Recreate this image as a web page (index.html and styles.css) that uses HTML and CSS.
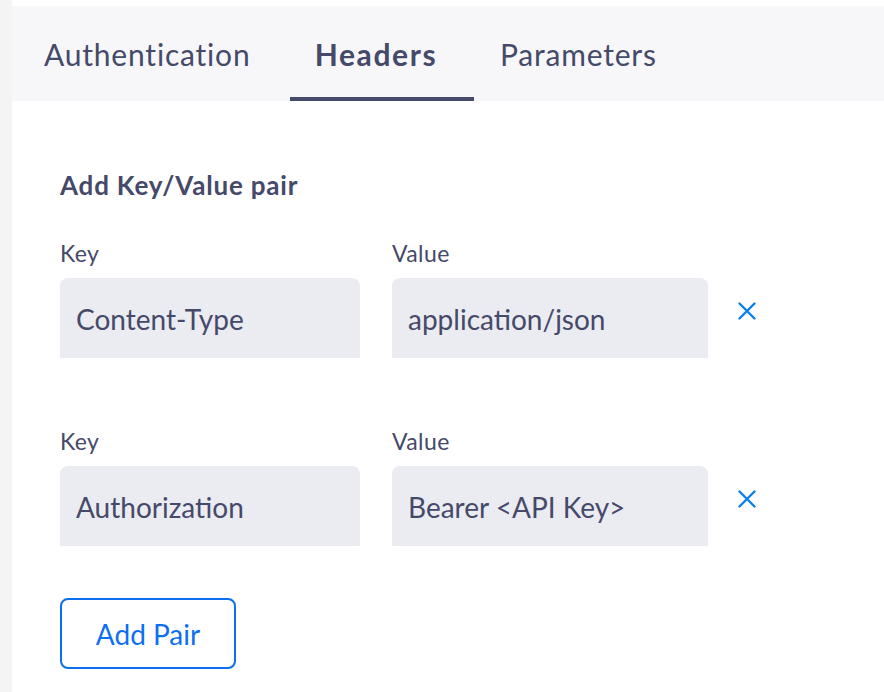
FILE: index.html
```html
<!DOCTYPE html>
<html lang="en">
<head>
    <meta charset="UTF-8">
    <meta name="viewport" content="width=device-width, initial-scale=1.0">
    <title>Headers</title>
    <link rel="stylesheet" href="styles.css">
</head>
<body>
    <div class="page">
        <div class="rail"></div>
        <div class="main">
            <div class="tabs">
                <div class="tab tab-auth">Authentication</div>
                <div class="tab tab-active">Headers</div>
                <div class="tab tab-params">Parameters</div>
            </div>

            <div class="content">
                <h2 class="title">Add Key/Value pair</h2>

                <div class="pair">
                    <div class="field field-key">
                        <label>Key</label>
                        <input type="text" class="input" value="Content-Type">
                    </div>
                    <div class="field field-value">
                        <label>Value</label>
                        <input type="text" class="input" value="application/json">
                    </div>
                    <button class="remove" title="Remove">
                        <svg width="18" height="18" viewBox="0 0 18 18">
                            <path d="M1.5 1.5 L16.5 16.5 M16.5 1.5 L1.5 16.5" stroke="#0a80ee" stroke-width="2.4" stroke-linecap="round" fill="none"/>
                        </svg>
                    </button>
                </div>

                <div class="pair">
                    <div class="field field-key">
                        <label>Key</label>
                        <input type="text" class="input" value="Authorization">
                    </div>
                    <div class="field field-value">
                        <label>Value</label>
                        <input type="text" class="input" value="Bearer <API Key>">
                    </div>
                    <button class="remove" title="Remove">
                        <svg width="18" height="18" viewBox="0 0 18 18">
                            <path d="M1.5 1.5 L16.5 16.5 M16.5 1.5 L1.5 16.5" stroke="#0a80ee" stroke-width="2.4" stroke-linecap="round" fill="none"/>
                        </svg>
                    </button>
                </div>

                <button class="add-pair">Add Pair</button>
            </div>
        </div>
    </div>
</body>
</html>
```

FILE: styles.css
```css
body {
    margin: 0;
    padding: 0;
    background: #fff;
    font-family: Lato, "Open Sans", sans-serif;
    color: #45496a;
}
.page {
    display: flex;
    min-height: 692px;
}
.rail {
    width: 12px;
    flex-shrink: 0;
    background: #f4f4f5;
}
.main {
    flex: 1;
    padding-top: 6px;
}
.tabs {
    display: flex;
    height: 95px;
    background: #f7f7f9;
}
.tab {
    display: flex;
    align-items: center;
    box-sizing: border-box;
    font-size: 30px;
    letter-spacing: 0.8px;
    color: #45496a;
}
.tab-auth {
    width: 278px;
    padding-left: 32px;
}
.tab-active {
    width: 184px;
    justify-content: center;
    padding-right: 12px;
    font-weight: 700;
    letter-spacing: 1.6px;
    box-shadow: inset 0 -4px 0 #45496a;
}
.tab-params {
    padding-left: 26px;
}
.content {
    padding: 0 48px;
}
.title {
    margin: 68px 0 39px;
    font-size: 26px;
    line-height: 32px;
    font-weight: 700;
    letter-spacing: 0.8px;
}
.pair {
    display: flex;
    align-items: flex-end;
    margin-bottom: 70px;
}
.pair:last-of-type {
    margin-bottom: 52px;
}
.field {
    display: flex;
    flex-direction: column;
}
.field-key {
    width: 300px;
    margin-right: 32px;
}
.field-value {
    width: 316px;
}
.field label {
    font-size: 23px;
    line-height: 26px;
    letter-spacing: 0.4px;
    margin-bottom: 12px;
}
.input {
    box-sizing: border-box;
    width: 100%;
    height: 80px;
    padding: 2px 16px 0;
    border: none;
    border-radius: 8px 8px 0 0;
    background: #ebecf1;
    font-family: inherit;
    font-size: 28px;
    color: #45496a;
    outline: none;
}
.remove {
    width: 18px;
    height: 18px;
    padding: 0;
    margin: 0 0 38px 30px;
    border: none;
    background: none;
    cursor: pointer;
    display: flex;
}
.add-pair {
    box-sizing: border-box;
    width: 176px;
    height: 71px;
    border: 2px solid #0c6ff2;
    border-radius: 8px;
    background: #fff;
    color: #0c6ff2;
    font-family: inherit;
    font-size: 28px;
    cursor: pointer;
}
```
